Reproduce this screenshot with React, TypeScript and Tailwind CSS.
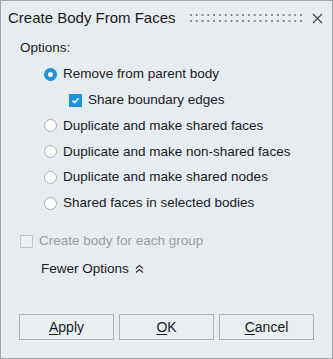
import React from "react";

function Radio({ checked, label }: { checked?: boolean; label: string }) {
  return (
    <div className="flex items-center h-[25.8px]">
      {checked ? (
        <span className="w-[13px] h-[13px] rounded-full bg-[#1b93db] flex items-center justify-center">
          <span className="w-[5px] h-[5px] rounded-full bg-white" />
        </span>
      ) : (
        <span className="w-[13px] h-[13px] rounded-full bg-white border border-[#a9adb1]" />
      )}
      <span className="ml-[6px]">{label}</span>
    </div>
  );
}

function Check({ checked, disabled, label }: { checked?: boolean; disabled?: boolean; label: string }) {
  return (
    <div className={"flex items-center h-[26px] " + (disabled ? "text-[#9a9ea3]" : "")}>
      {checked ? (
        <span className="w-[13px] h-[13px] bg-[#1b93db] flex items-center justify-center">
          <svg width="9" height="9" viewBox="0 0 9 9" fill="none">
            <path d="M1.5 4.6 L3.6 6.6 L7.6 2.2" stroke="white" strokeWidth="1.6" />
          </svg>
        </span>
      ) : (
        <span className="w-[13px] h-[13px] bg-[#eef1f3] border border-[#c2c6ca]" />
      )}
      <span className="ml-[6px]">{label}</span>
    </div>
  );
}

function Btn({ k, rest }: { k: string; rest: string }) {
  return (
    <button className="w-[95px] h-[26px] border border-[#adb1b5] bg-[#e9eef1] text-[14px] text-[#1a1a1a]">
      <span className="underline underline-offset-2">{k}</span>
      {rest}
    </button>
  );
}

export default function App() {
  return (
    <div
      className="w-[333px] h-[359px] bg-[#e6ecf0] border border-[#a2a6aa] flex flex-col text-[13.5px] text-[#1b1b22]"
      style={{ fontFamily: '"Liberation Sans", Arial, sans-serif' }}
    >
      {/* title bar */}
      <div className="flex items-center h-[34px] pl-[7px] pr-[9px]">
        <span className="text-[15px] text-[#1a1a1a]">Create Body From Faces</span>
        <div className="flex-1 ml-[12px] mr-[7px] h-[12px] bg-[radial-gradient(circle,#878b90_1px,transparent_1.3px)] bg-[length:5.8px_6px]" />
        <svg width="11" height="11" viewBox="0 0 11 11" stroke="#444" strokeWidth="1.2">
          <path d="M1 1 L10 10 M10 1 L1 10" />
        </svg>
      </div>

      <div className="pl-[19px] pt-[3px]">Options:</div>

      <div className="pl-[43px] pt-[3px]">
        <Radio checked label="Remove from parent body" />
        <div className="pl-[25px]">
          <Check checked label="Share boundary edges" />
        </div>
        <Radio label="Duplicate and make shared faces" />
        <Radio label="Duplicate and make non-shared faces" />
        <Radio label="Duplicate and make shared nodes" />
        <Radio label="Shared faces in selected bodies" />
      </div>

      <div className="pl-[19px] pt-[12px]">
        <Check disabled label="Create body for each group" />
      </div>

      <div className="pl-[40px] pt-[2px] flex items-center h-[28px]">
        <span>Fewer Options</span>
        <svg className="ml-[6px]" width="9" height="10" viewBox="0 0 9 10" fill="none" stroke="#333" strokeWidth="1.2">
          <path d="M1 4.5 L4.5 1.5 L8 4.5 M1 8.5 L4.5 5.5 L8 8.5" />
        </svg>
      </div>

      <div className="flex-1" />

      <div className="flex gap-[5px] pl-[18px] pb-[18px]">
        <Btn k="A" rest="pply" />
        <Btn k="O" rest="K" />
        <Btn k="C" rest="ancel" />
      </div>
    </div>
  );
}
